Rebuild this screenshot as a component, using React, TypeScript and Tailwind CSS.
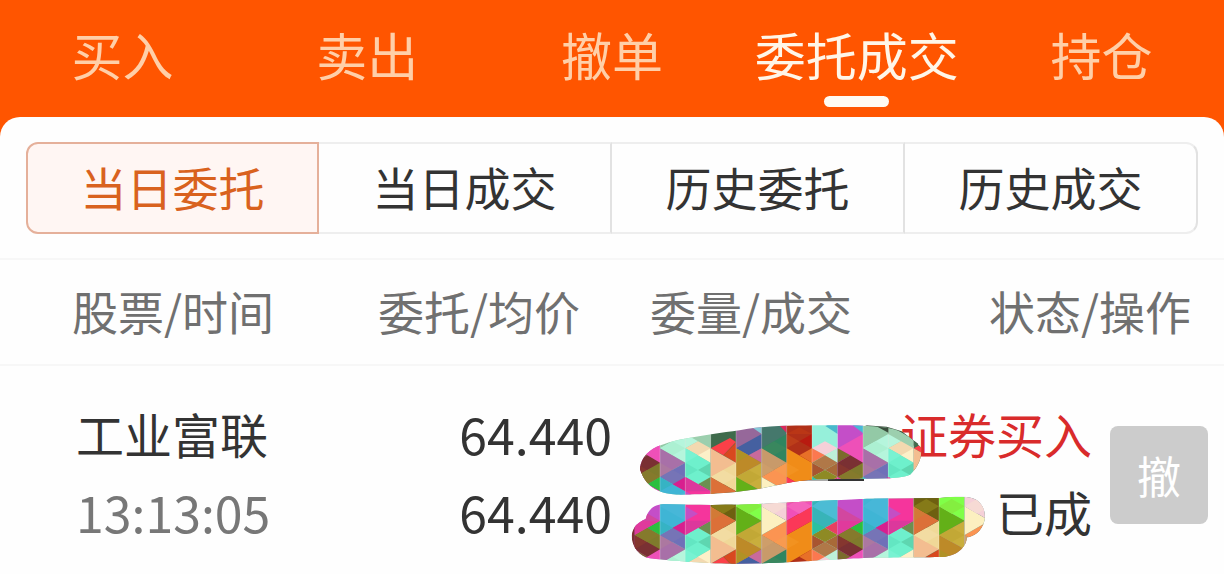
import { useState } from "react";
import clsx from "clsx";

const navTabs = ["买入", "卖出", "撤单", "委托成交", "持仓"];
const subTabs = ["当日委托", "当日成交", "历史委托", "历史成交"];

const orders = [
  { name: "工业富联", time: "13:13:05", price: "64.440", avg: "64.440", side: "证券买入", status: "已成" },
];

/** One repeat of the mosaic: eight columns of triangles, [fill, points]. */
const tile: [string, string][] = [
  ["#c44ec8", "44,0 120,0 120,330 44,330"],
  ["#48b8d5", "84,30 120,20 120,57"],
  ["#ee50b8", "44,103 120,60 120,146"],
  ["#7b6b2c", "44,103 82,124 44,146"],
  ["#7a3033", "44,146 82,124 120,146 120,150 44,189"],
  ["#85362f", "44,146 82,168 44,189"],
  ["#7f7a2c", "44,189 120,146 120,189 82,211"],
  ["#857a2c", "82,168 120,189 82,211 44,189"],
  ["#2bbf3f", "82,211 120,189 120,232"],
  ["#e03a9c", "44,189 120,232 44,234"],
  ["#d2479f", "44,232 120,232 44,275"],

  ["#93c9a6", "120,0 196,0 196,330 120,330"],
  ["#b5f5dc", "120,103 196,60 196,146"],
  ["#acf0d2", "158,82 196,103 158,124 120,103"],
  ["#a870a8", "120,103 196,146 120,189"],
  ["#ac78a0", "120,146 158,168 120,189"],
  ["#6f70b8", "196,146 120,189 196,232"],
  ["#7674b6", "158,168 196,189 158,211 120,189"],
  ["#3fb5d5", "120,189 196,232 196,330 120,330"],
  ["#36b3c4", "120,189 158,211 120,232"],
  ["#47b7d8", "120,275 196,232 196,330"],
  ["#d81f8f", "196,189 158,211 196,232"],

  ["#9ccfae", "196,0 272,0 272,330 196,330"],
  ["#b8f5dc", "196,60 234,82 196,103"],
  ["#f3d9b0", "196,103 234,82 272,103 272,146"],
  ["#fdf0c8", "272,103 272,146 234,124"],
  ["#6ef0cc", "196,103 272,146 272,189 234,211 196,189"],
  ["#63e6c2", "196,146 234,168 196,189"],
  ["#78f2d2", "196,103 234,124 196,146"],
  ["#5ed6b0", "272,146 272,189 234,168"],
  ["#6b8f50", "272,189 272,232 234,211"],
  ["#f5359c", "196,189 272,232 272,330 196,330"],
  ["#c44fc4", "196,232 234,253 196,275"],
  ["#dc389c", "196,189 272,232 196,232"],

  ["#3f6b4c", "272,0 348,0 348,330 272,330"],
  ["#fb4048", "272,103 330,72 348,84 310,124"],
  ["#d8481f", "348,86 348,146 310,124"],
  ["#f3bd90", "272,103 348,146 348,189 272,189"],
  ["#f0d898", "272,189 348,146 348,232"],
  ["#f2dca2", "310,168 348,189 310,211 272,189"],
  ["#dc7038", "272,189 348,232 272,275"],
  ["#d27a36", "272,232 310,253 272,275"],
  ["#6e6010", "272,275 348,232 348,330 272,330"],
  ["#857a18", "272,275 310,253 348,275 310,297"],

  ["#96689a", "348,0 425,0 425,330 348,330"],
  ["#85c8d8", "396,40 425,20 425,60"],
  ["#4560a0", "348,103 425,60 425,103 386,124"],
  ["#c96a9c", "386,124 425,103 425,146"],
  ["#bd8a28", "348,103 425,146 348,189"],
  ["#b09226", "348,103 386,124 348,146"],
  ["#c9ae3c", "348,189 425,146 425,232"],
  ["#c2a836", "386,168 425,189 386,211 348,189"],
  ["#63b018", "348,189 425,232 348,275"],
  ["#80ff48", "348,275 425,232 425,330 348,330"],
  ["#84ee40", "348,275 386,253 425,275 386,297"],

  ["#45786c", "425,0 500,0 500,330 425,330"],
  ["#d8285c", "474,30 500,20 500,57"],
  ["#2f8560", "425,103 500,60 500,146"],
  ["#39875e", "462,82 500,103 462,124 425,103"],
  ["#c89a6a", "425,103 500,146 425,189"],
  ["#ce9e6a", "425,146 462,168 425,189"],
  ["#fb9452", "425,189 500,146 500,232"],
  ["#f89a50", "462,168 500,189 500,146"],
  ["#fcf0c0", "425,189 500,232 425,275"],
  ["#f5d0d8", "425,275 500,232 500,330 425,330"],
  ["#f6dad4", "425,275 462,253 500,275 462,297"],

  ["#b03018", "500,0 576,0 576,330 500,330"],
  ["#bc3e1a", "500,60 538,82 500,103"],
  ["#ba3616", "500,60 576,60 538,40"],
  ["#b81a10", "538,82 576,60 576,103"],
  ["#f08c18", "500,103 576,146 576,232 500,189"],
  ["#f29220", "500,146 538,168 500,189"],
  ["#e87028", "538,124 576,103 576,146"],
  ["#fb3858", "500,189 576,232 576,275 538,253 500,232"],
  ["#f050b8", "500,232 576,275 576,330 500,330"],
  ["#f464bc", "500,275 538,253 576,275 538,297"],

  ["#96f0da", "576,0 653,0 653,330 576,330"],
  ["#48b8cc", "616,36 653,20 653,60"],
  ["#f5d0d8", "576,103 615,82 653,103 615,124"],
  ["#bdf0d8", "615,124 653,103 653,146"],
  ["#fb7850", "576,103 615,124 576,146"],
  ["#b07848", "576,146 615,124 653,146 615,168"],
  ["#a85530", "576,146 615,168 576,189"],
  ["#8e8a24", "576,189 615,168 653,189 615,211"],
  ["#a86a38", "615,168 653,146 653,189"],
  ["#38b4b8", "576,189 653,232 653,330 576,330"],
  ["#2cc0a0", "576,189 615,211 576,232"],
  ["#4cbcd4", "576,275 653,232 653,330"],
  ["#e84060", "653,189 615,211 653,232"],
];

function Tiles() {
  return (
    <>
      {[0, 609].map((dx) => (
        <g key={dx} transform={`translate(${dx} 0)`}>
          {tile.map(([fill, points]) => (
            <polygon key={fill + points} fill={fill} points={points} />
          ))}
          <path d="M120 0V330M196 0V330M272 0V330M348 0V330M425 0V330M500 0V330M576 0V330M653 0V330" stroke="#fff" strokeOpacity="0.35" strokeWidth="2" />
        </g>
      ))}
    </>
  );
}

/** Brush strokes that hide the order quantity. */
function Mosaic() {
  return (
    <svg className="h-[152px] w-[380px]" viewBox="0 0 1140 456" aria-hidden="true">
      <defs>
        <clipPath id="stroke-top">
          <path d="M60 165C62 130 90 105 122 94C180 70 290 60 400 42C480 33 600 34 690 34C760 36 810 40 835 50C870 68 890 85 902 100C910 130 890 165 870 182C850 190 820 192 800 193L600 196C540 198 500 208 430 222C350 238 230 242 170 242C110 238 75 215 60 165Z" />
        </clipPath>
        <clipPath id="stroke-bottom">
          <path d="M77 315C85 280 110 270 135 271C250 274 380 274 470 267C620 260 700 255 750 254L960 252C1010 247 1040 248 1055 252C1085 260 1098 290 1094 318C1085 355 1060 368 1040 370C1040 400 1010 425 975 428C900 431 780 428 700 433C600 440 480 448 350 449C260 450 130 438 90 433C60 428 35 400 35 365C38 335 60 322 77 315Z" />
        </clipPath>
      </defs>
      <path d="M535 198H624" stroke="#999" strokeWidth="5" />
      <path d="M624 198H732" stroke="#333" strokeWidth="6" />
      <path d="M735 34L800 38L845 52L895 90L888 98L800 60Z" fill="#3a4d3c" />
      <g clipPath="url(#stroke-top)">
        <Tiles />
        <path d="M768 36L805 42V56Z" fill="#3a4d3c" />
      </g>
      <g clipPath="url(#stroke-bottom)">
        <rect x="30" y="250" width="20" height="200" fill="#7a3033" />
        <g transform="translate(0 552) scale(1 -1)">
          <Tiles />
        </g>
      </g>
    </svg>
  );
}

export default function App() {
  const [nav, setNav] = useState("委托成交");
  const [sub, setSub] = useState("当日委托");

  return (
    <div className="flex min-h-screen flex-col bg-[#ff5500] font-['Noto_Sans_CJK_SC',sans-serif] text-[#333]">
      <nav className="grid grid-cols-5">
        {navTabs.map((label) => (
          <button
            key={label}
            type="button"
            onClick={() => setNav(label)}
            className={clsx(
              "flex flex-col items-center gap-[2px] pt-[14px] pb-[10px] text-[51px] leading-[80px] whitespace-nowrap",
              nav === label ? "text-[#fff6e8]" : "text-[#ffcfa8]",
            )}
          >
            {label}
            <span className={clsx("h-[11px] w-[65px] rounded-full", nav === label && "bg-[#fffaf2]")} />
          </button>
        ))}
      </nav>

      <main className="flex-1 rounded-t-[20px] bg-[#fefefe] pt-[25px]">
        <div className="mx-[26px] grid h-[92px] grid-cols-4">
          {subTabs.map((label) => (
            <button
              key={label}
              type="button"
              onClick={() => setSub(label)}
              className={clsx(
                "border-y-2 border-r-2 pb-1 text-[46px] whitespace-nowrap first:rounded-l-xl first:border-l-2 last:rounded-r-xl",
                sub === label
                  ? "border-[#e5b09a] bg-[#fff6f3] text-[#d9621e]"
                  : "border-y-[#eee] border-r-[#e2e2e2]",
              )}
            >
              {label}
            </button>
          ))}
        </div>

        <table className="mt-6 w-full table-fixed border-collapse">
          <thead>
            <tr className="h-[106px] border-y-2 border-[#f7f7f7] text-[46px] whitespace-nowrap text-[#707070]">
              <th className="w-[27%] pb-1 pl-[72px] text-left font-normal">股票/时间</th>
              <th className="w-[23%] pr-8 pb-1 text-right font-normal">委托/均价</th>
              <th className="w-[20%] pb-1 pl-[38px] text-left font-normal">委量/成交</th>
              <th className="w-[30%] pr-[33px] pb-1 text-right font-normal">状态/操作</th>
            </tr>
          </thead>
          <tbody>
            {orders.map((o) => (
              <tr key={o.time} className="align-top text-[48px] leading-[78px] whitespace-nowrap">
                <td className="pt-7 pl-[76px]">
                  <div>{o.name}</div>
                  <div className="text-[50px] text-[#777]">{o.time}</div>
                </td>
                <td className="pt-7 text-right text-[50px]">
                  <div>{o.price}</div>
                  <div>{o.avg}</div>
                </td>
                <td className="relative">
                  <div className="absolute top-12 left-2 z-10">
                    <Mosaic />
                  </div>
                </td>
                <td className="pt-7 pr-4">
                  <div className="flex items-start justify-end gap-[18px]">
                    <div className="text-right">
                      <div className="text-[#d92b2b]">{o.side}</div>
                      <div>{o.status}</div>
                    </div>
                    <button type="button" className="mt-8 size-[98px] rounded-lg bg-[#ccc] text-[44px] leading-none text-white">
                      撤
                    </button>
                  </div>
                </td>
              </tr>
            ))}
          </tbody>
        </table>
      </main>
    </div>
  );
}
